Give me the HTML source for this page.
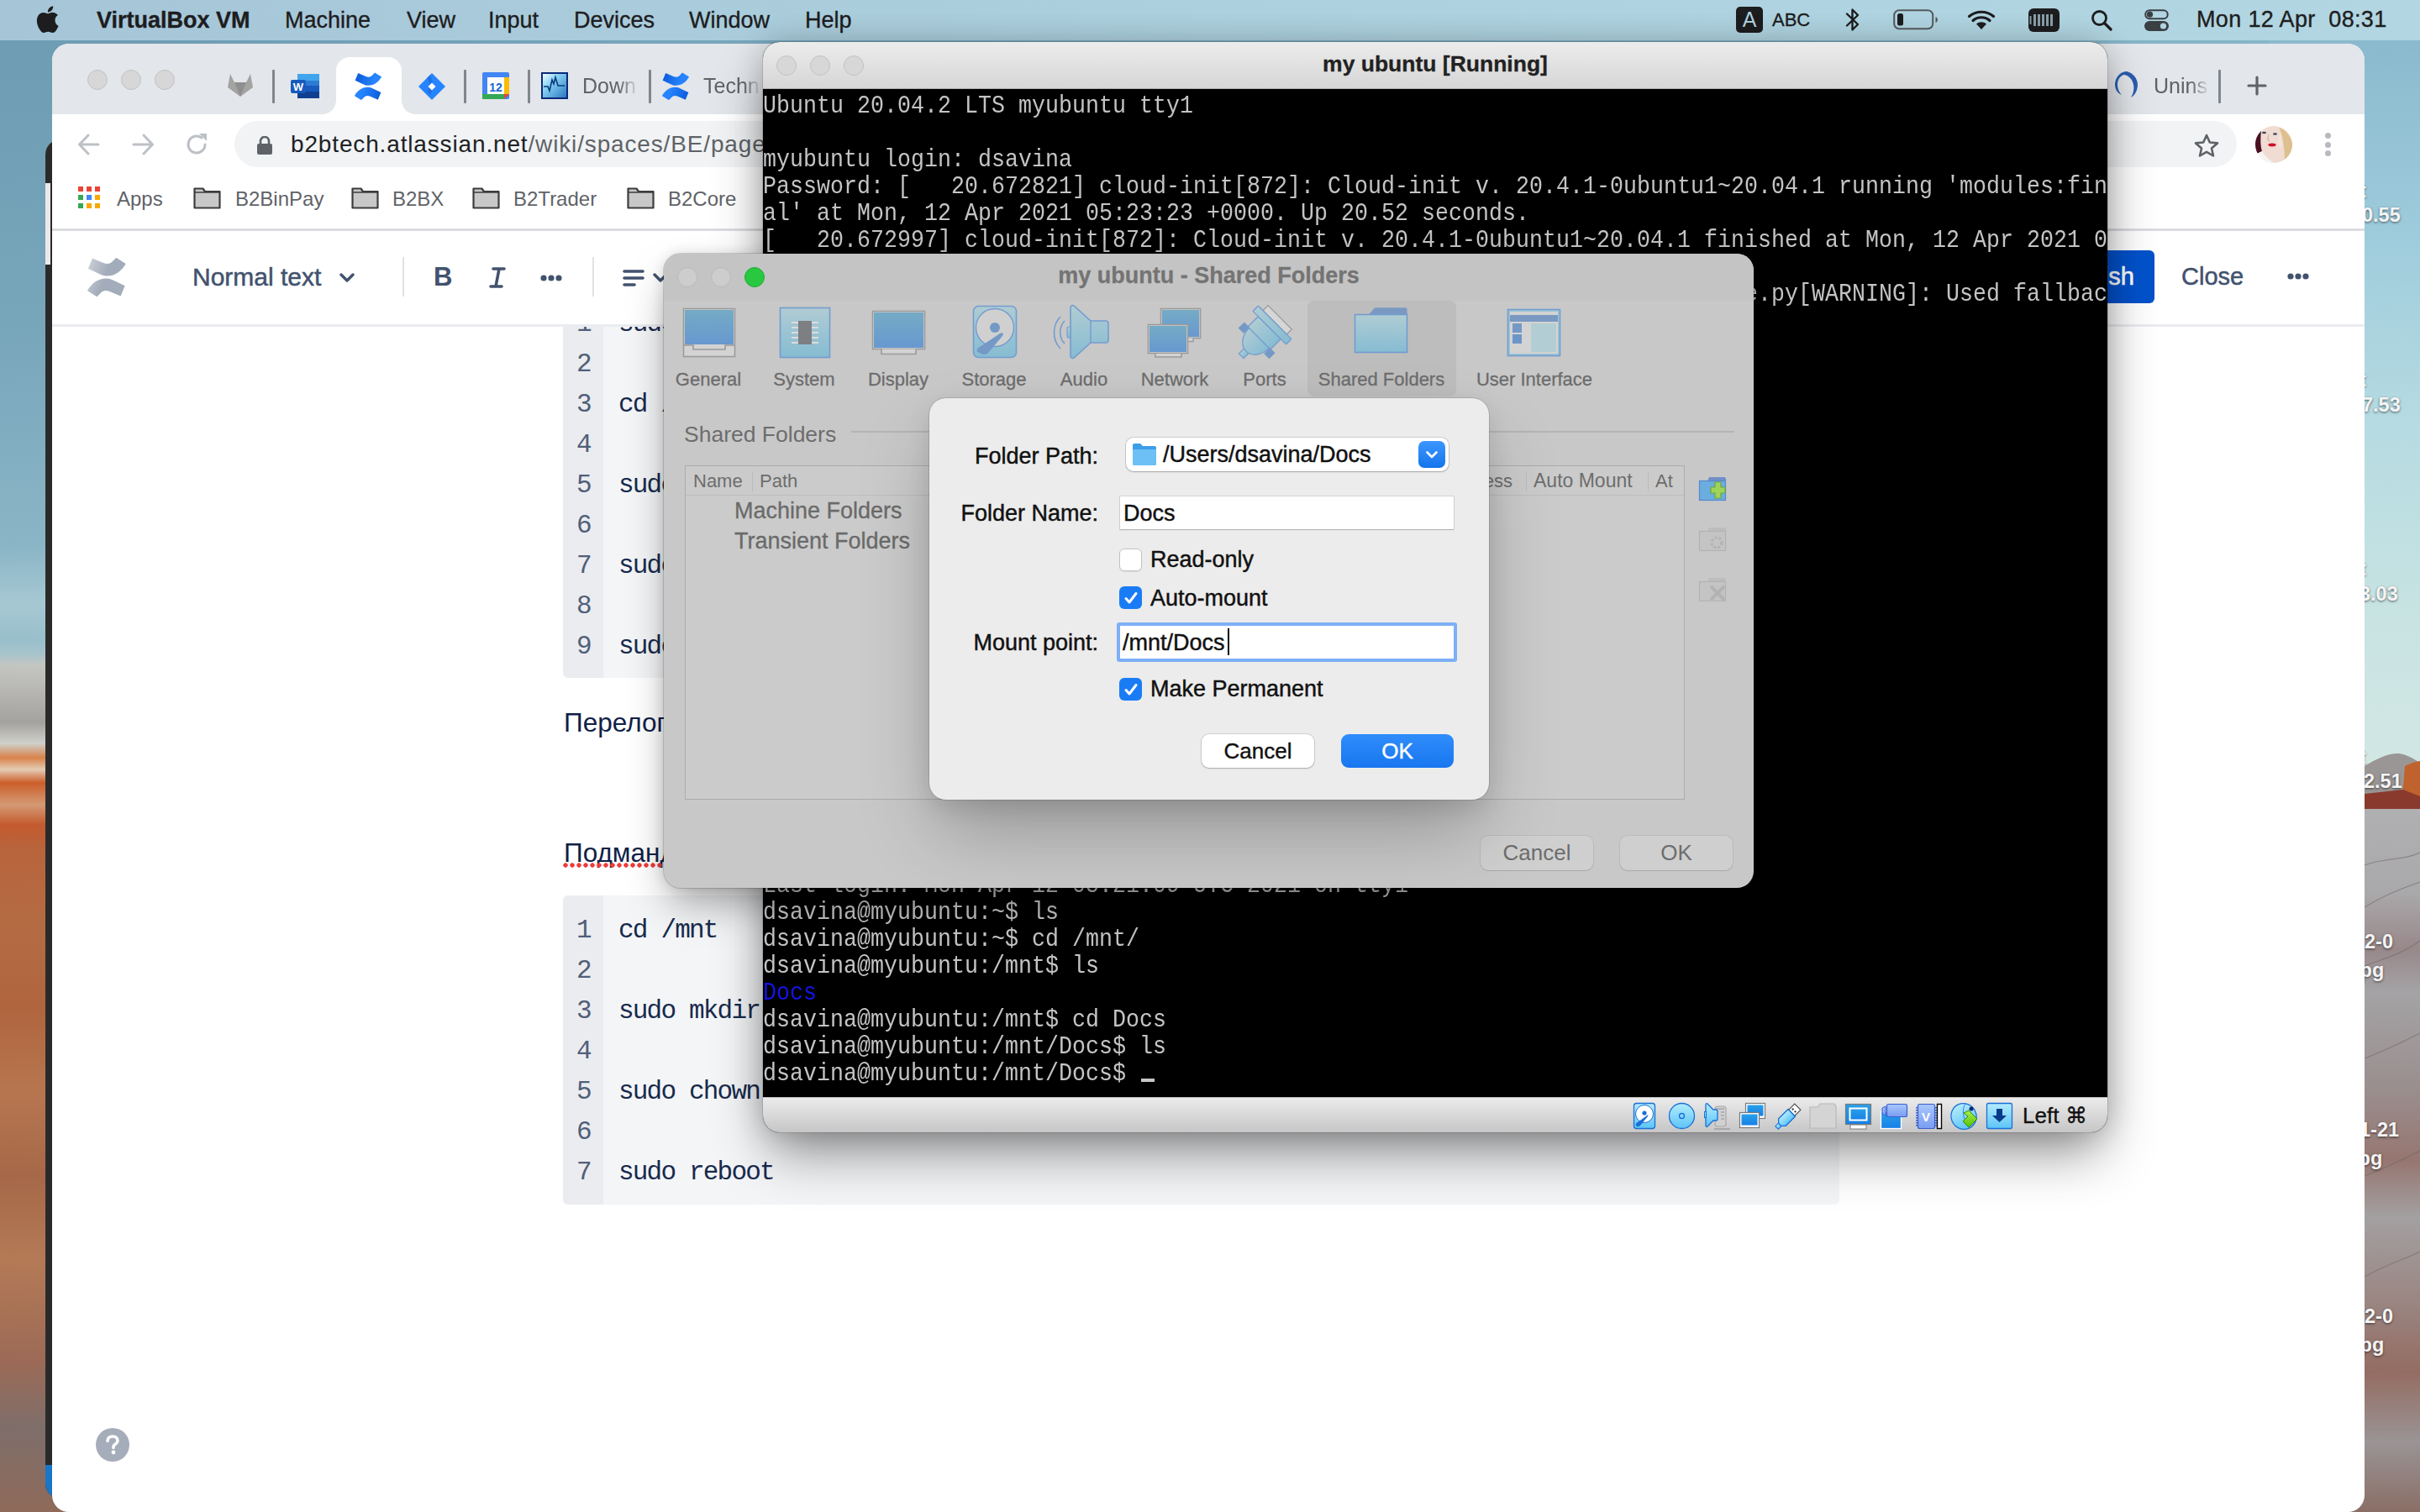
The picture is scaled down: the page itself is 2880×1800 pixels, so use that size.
<!DOCTYPE html>
<html><head><meta charset="utf-8">
<style>
*{box-sizing:border-box;margin:0;padding:0}
html,body{width:2880px;height:1800px;overflow:hidden}
body{font-family:"Liberation Sans",sans-serif;position:relative;background:#9cc3d4}
.a{position:absolute}
#wall{left:0;top:0;width:2880px;height:1800px;background:linear-gradient(90deg,#6c9cb3,#7eaec2 50%,#86b6ca)}
#wallR{left:2700px;top:0;width:180px;height:1800px}
#wallL{left:0;top:0;width:140px;height:1800px;
background:linear-gradient(180deg,#6c9cb3 0px,#78a6bb 400px,#8ab5c6 650px,#a6c8d3 720px,#98bfcb 760px,#a6c4cc 778px,#c4c6c2 792px,#b4b2ae 830px,#a4a29e 860px,#cfd0cb 885px,#d8824a 902px,#e4ccb4 916px,#cc5e2a 932px,#d49a74 958px,#c45a2e 982px,#b8643c 1010px,#b46b42 1100px,#b0653e 1200px,#b77650 1300px,#a66848 1400px,#b47a56 1500px,#9c6a56 1620px,#7e6e6a 1700px,#8f6a5a 1800px)}
.dl{position:absolute;left:2814px;font-size:23.5px;font-weight:bold;color:#f4f4f4;text-shadow:0 1px 3px rgba(0,0,0,0.6);white-space:nowrap;overflow:hidden}
#menubar{left:0;top:0;width:2880px;height:48px;background:linear-gradient(90deg,#a6c6d8,#acd0de 50%,#b2d6e2);color:#1d1d1f;font-size:27px}
#menubar span{position:absolute;top:9px;white-space:nowrap;-webkit-text-stroke:0.35px #1d1d1f}

#darkwin{left:54px;top:166px;width:40px;height:1618px;background:#2b2a2a;border-radius:18px 0 0 18px;overflow:hidden}
#browser{left:62px;top:52px;width:2752px;height:1748px;background:#fff;border-radius:20px 20px 20px 20px;overflow:hidden}
#tabstrip{left:0;top:0;width:2752px;height:84px;background:#e3e6ea}
.tl{position:absolute;width:24px;height:24px;border-radius:50%;background:#d7d7d7;border:1px solid #c2c2c2}
.sep{position:absolute;width:2.5px;background:#80868b;border-radius:1px}
.tabt{position:absolute;font-size:25px;color:#5f6368;white-space:nowrap;top:36px}
#omni{left:217px;top:92px;width:2383px;height:55px;background:#f1f3f4;border-radius:28px}
.bm{position:absolute;font-size:24px;color:#5f6368;top:170.5px;white-space:nowrap}
#bmline{left:0;top:220px;width:2752px;height:3px;background:#dadce0}
#cftool{left:0;top:223px;width:2752px;height:113px;background:#fff}
#cfline{left:0;top:334px;width:2752px;height:3px;background:#ebecf0}
.cfsep{position:absolute;width:2px;height:47px;top:31px;background:#dfe1e6}
.code{position:absolute;left:608px;width:1519px;background:#f4f5f7;border-radius:6px;overflow:hidden}
.gut{position:absolute;left:0;top:0;width:48px;height:100%;background:#ebecf0}
.ln{position:absolute;left:16px;font-family:"Liberation Mono",monospace;font-size:31px;letter-spacing:-1.8px;color:#505f79;line-height:48px}
.cl{position:absolute;left:66px;font-family:"Liberation Mono",monospace;font-size:31px;letter-spacing:-1.8px;color:#172b4d;line-height:48px;white-space:pre}
.ptxt{position:absolute;left:609px;font-size:31.5px;color:#0f2147;white-space:nowrap}

#vm{left:908px;top:50px;width:1600px;height:1298px;border-radius:20px;overflow:hidden;background:#000;box-shadow:0 30px 65px -8px rgba(0,0,0,0.45),0 0 34px rgba(0,0,0,0.17),0 0 0 1px rgba(0,0,0,0.12)}
#vmtitle{left:0;top:0;width:1600px;height:56px;background:linear-gradient(180deg,#ececec,#d6d6d6);border-bottom:1px solid #aeaeae}
#vmtitle .t{position:absolute;left:0;width:1600px;top:11px;text-align:center;font-size:26.5px;font-weight:bold;color:#222;-webkit-text-stroke:0.3px #222}
#term{left:0;top:56px;padding-top:0;width:1600px;height:1200px;background:#000;overflow:hidden}
.tr{position:absolute;left:0;height:32px;margin-top:1.7px;font-family:"Liberation Mono",monospace;font-size:26.6px;letter-spacing:0.04px;color:#c4c4c4;white-space:pre;line-height:32px;transform:scaleY(1.12);transform-origin:0 0}
#vmstatus{left:0;top:1256px;width:1600px;height:42px;background:linear-gradient(180deg,#ebebeb,#c6c6c6);border-top:1px solid #bdbdbd}
#set{left:790px;top:302px;width:1297px;height:755px;border-radius:20px;background:#c8c8c8;box-shadow:0 24px 50px -8px rgba(0,0,0,0.38),0 0 16px rgba(0,0,0,0.12),0 0 0 1px rgba(0,0,0,0.15);overflow:hidden}
.lbl{position:absolute;font-size:22px;color:#6d6d6d;-webkit-text-stroke:0.3px #6d6d6d;white-space:nowrap;text-align:center;margin-top:4px}
#sheet{left:1106px;top:474px;width:666px;height:478px;border-radius:20px;background:#ececec;box-shadow:0 45px 90px -10px rgba(0,0,0,0.26),0 10px 28px rgba(0,0,0,0.10),0 0 0 1px rgba(0,0,0,0.12)}
.sl{position:absolute;font-size:27px;color:#111;white-space:nowrap;-webkit-text-stroke:0.45px #111}
.cb{position:absolute;left:226px;width:27px;height:27px;border-radius:6px}
.cbon{background:#1a7cf5}
.cboff{background:#fff;border:1px solid #c2c2c2;box-shadow:0 1px 1px rgba(0,0,0,0.08)}
</style></head><body>
<div id="wall" class="a"></div>
<div id="wallL" class="a"></div>
<svg id="wallR" class="a" width="180" height="1800" viewBox="2700 0 180 1800">
<defs>
<linearGradient id="sky" x1="0" y1="0" x2="0" y2="1"><stop offset="0" stop-color="#86b6ca"/><stop offset="0.28" stop-color="#9ccadb"/><stop offset="0.55" stop-color="#b6dbe2"/><stop offset="0.8" stop-color="#c8e3e2"/><stop offset="1" stop-color="#d2e7e4"/></linearGradient>
<linearGradient id="rock" x1="0" y1="0" x2="0" y2="1"><stop offset="0" stop-color="#b0afb1"/><stop offset="0.12" stop-color="#a9a8aa"/><stop offset="0.2" stop-color="#98888a"/><stop offset="0.26" stop-color="#a4a3a5"/><stop offset="0.4" stop-color="#9a8e8e"/><stop offset="0.5" stop-color="#967670"/><stop offset="0.58" stop-color="#a3a0a1"/><stop offset="0.7" stop-color="#9a8682"/><stop offset="0.8" stop-color="#946c62"/><stop offset="0.9" stop-color="#9a9495"/><stop offset="1" stop-color="#8a6e66"/></linearGradient>
</defs>
<rect x="2700" y="0" width="180" height="920" fill="url(#sky)"/>
<path d="M2700 940L2814 912C2830 902 2845 896 2855 897C2865 898 2875 905 2880 908V1800H2700Z" fill="#9a9696"/>
<path d="M2862 912C2870 908 2878 906 2880 906V962H2858Z" fill="#c0622e"/>
<path d="M2700 955L2814 945L2860 940L2880 948V965H2700Z" fill="#8a3a2c"/>
<rect x="2700" y="963" width="180" height="837" fill="url(#rock)"/>
<g stroke="#6e6464" stroke-width="1.2" fill="none" opacity="0.5">
<path d="M2814 1030C2840 1020 2860 1025 2880 1015"/><path d="M2814 1080C2830 1070 2850 1060 2880 1050"/><path d="M2814 1150C2840 1140 2860 1135 2880 1120"/><path d="M2814 1260C2840 1250 2860 1240 2880 1230"/><path d="M2814 1400C2840 1390 2860 1380 2880 1370"/><path d="M2814 1520C2840 1505 2860 1500 2880 1490"/>
</g>
</svg>
<div class="dl" style="top:214px;width:66px"><span style="margin-left:-6px">t</span></div>
<div class="dl" style="top:439px;width:66px"><span style="margin-left:-6px">t</span></div>
<div class="dl" style="top:664px;width:66px"><span style="margin-left:-6px">t</span></div>
<div class="dl" style="top:888px;width:66px"><span style="margin-left:-6px">t</span></div>
<div class="dl" style="top:243px;width:66px"><span style="margin-left:-3px">0.55</span></div>
<div class="dl" style="top:469px;width:66px"><span style="margin-left:-3px">7.53</span></div>
<div class="dl" style="top:694px;width:66px"><span style="margin-left:-6px">3.03</span></div>
<div class="dl" style="top:917px;width:66px"><span style="margin-left:-1px">2.51</span></div>
<div class="dl" style="top:1104px;width:66px;line-height:34px"><span style="margin-left:0px">2-0</span><br><span style="margin-left:-12px">jpg</span></div>
<div class="dl" style="top:1328px;width:66px;line-height:34px"><span style="margin-left:-6px">1-21</span><br><span style="margin-left:-14px">jpg</span></div>
<div class="dl" style="top:1550px;width:66px;line-height:34px"><span style="margin-left:0px">2-0</span><br><span style="margin-left:-12px">jpg</span></div>
<div id="menubar" class="a">
  <span style="left:41px;top:6px"><svg width="30" height="34" viewBox="0 0 30 34"><path fill="#1d1d1f" d="M24.5 18c0-4 3.3-5.9 3.4-6-1.9-2.7-4.8-3.1-5.8-3.1-2.5-.3-4.8 1.4-6.1 1.4-1.3 0-3.2-1.4-5.2-1.3-2.7 0-5.2 1.6-6.6 4-2.8 4.9-.7 12.1 2 16.1 1.3 1.9 2.9 4.1 5 4 2-.1 2.8-1.3 5.2-1.3 2.4 0 3.1 1.3 5.2 1.3 2.2 0 3.5-2 4.8-3.9 1.5-2.2 2.1-4.3 2.2-4.4-.1 0-4.1-1.6-4.1-6.8zM20.6 6.2c1.1-1.3 1.8-3.2 1.6-5-1.6.1-3.5 1.1-4.6 2.4-1 1.2-1.9 3-1.7 4.8 1.8.1 3.6-.9 4.7-2.2z"/></svg></span>
  <span style="left:115px;font-weight:bold">VirtualBox VM</span>
  <span style="left:339px">Machine</span>
  <span style="left:484px">View</span>
  <span style="left:581px">Input</span>
  <span style="left:683px">Devices</span>
  <span style="left:820px">Window</span>
  <span style="left:958px">Help</span>

  <div class="a" style="left:2066px;top:8px;width:32px;height:31px;border-radius:5px;background:#1d1d1f;color:#b0d3e0;font-size:25px;text-align:center;line-height:31px">A</div>
  <span style="left:2109px;top:11px;font-size:22px">ABC</span>
  <svg class="a" style="left:2195px;top:8px" width="20" height="31" viewBox="0 0 20 31"><path d="M3 8.5L16 21L9.5 27.5V3.5L16 10L3 22.5" fill="none" stroke="#1d1d1f" stroke-width="2.4" stroke-linejoin="round" stroke-linecap="round"/></svg>
  <svg class="a" style="left:2253px;top:11px" width="55" height="25" viewBox="0 0 55 25"><rect x="1.2" y="1.2" width="46" height="22" rx="6" fill="none" stroke="#555a5e" stroke-width="2"/><rect x="5" y="5" width="7" height="14.5" rx="2.5" fill="#1d1d1f"/><path d="M50.5 9V16C52 15.5 53 14 53 12.5C53 11 52 9.5 50.5 9Z" fill="#555a5e"/></svg>
  <svg class="a" style="left:2341px;top:11px" width="34" height="25" viewBox="0 0 34 25"><path d="M17 24L11 17.5C14.5 14.5 19.5 14.5 23 17.5Z" fill="#1d1d1f"/><path d="M7 13.5C12.5 8.5 21.5 8.5 27 13.5" fill="none" stroke="#1d1d1f" stroke-width="3.2" stroke-linecap="round"/><path d="M2.5 8.5C10.5 1.5 23.5 1.5 31.5 8.5" fill="none" stroke="#1d1d1f" stroke-width="3.2" stroke-linecap="round"/></svg>
  <svg class="a" style="left:2414px;top:10px" width="37" height="28" viewBox="0 0 37 28"><rect x="0" y="0" width="37" height="28" rx="6" fill="#1d1d1f"/><g fill="#8a9ea8"><rect x="6" y="7" width="3" height="14"/><rect x="11" y="7" width="3" height="14"/><rect x="16" y="7" width="3" height="14"/><rect x="21" y="7" width="3" height="14"/><rect x="26" y="7" width="3" height="14"/></g><rect x="1.5" y="9" width="2" height="10" fill="#8a9ea8"/></svg>
  <svg class="a" style="left:2488px;top:11px" width="26" height="26" viewBox="0 0 26 26"><circle cx="10.5" cy="10.5" r="8" fill="none" stroke="#1d1d1f" stroke-width="2.8"/><path d="M16.5 16.5L24 24" stroke="#1d1d1f" stroke-width="3.2" stroke-linecap="round"/></svg>
  <svg class="a" style="left:2552px;top:11px" width="29" height="26" viewBox="0 0 29 26"><rect x="1.2" y="1.2" width="26.5" height="10" rx="5" fill="none" stroke="#3a3f44" stroke-width="2"/><circle cx="6.5" cy="6.2" r="3.6" fill="#3a3f44"/><rect x="0" y="14" width="29" height="12" rx="6" fill="#3a3f44"/><circle cx="22.5" cy="20" r="3.6" fill="#b0d3e0"/></svg>
  <span style="left:2614px;top:8px;letter-spacing:0.35px">Mon 12 Apr&nbsp;&nbsp;08:31</span>
</div>

<div id="darkwin" class="a"><div class="a" style="left:0;top:52px;width:6px;height:97px;background:#ece8e8"></div><div class="a" style="left:0;top:1578px;width:14px;height:40px;background:#1a76c8"></div></div>
<div id="browser" class="a">
 <div id="tabstrip" class="a">
  <div class="tl" style="left:42px;top:31px"></div>
  <div class="tl" style="left:82px;top:31px"></div>
  <div class="tl" style="left:122px;top:31px"></div>
  <!-- gitlab -->
  <svg class="a" style="left:208px;top:34px" width="32" height="30" viewBox="0 0 32 30"><path fill="#a3a3a3" d="M16 29 L1 18 L4 2 L9 12 H23 L28 2 L31 18 Z"/><path fill="#8f8f8f" d="M16 29 L9 12 H23 Z"/></svg>
  <div class="sep" style="left:262px;top:31px;height:40px"></div>
  <!-- word -->
  <svg class="a" style="left:284px;top:36px" width="34" height="29" viewBox="0 0 34 29"><rect x="8" y="0" width="26" height="29" rx="2" fill="#2b7cd3"/><rect x="8" y="0" width="26" height="8" fill="#41a5ee"/><rect x="8" y="14" width="26" height="8" fill="#185abd"/><rect x="8" y="21" width="26" height="8" fill="#103f91"/><rect x="0" y="7" width="18" height="16" rx="2" fill="#185abd"/><text x="9" y="20" font-family="Liberation Sans" font-weight="bold" font-size="13" fill="#fff" text-anchor="middle">W</text></svg>
  <!-- active tab -->
  <div class="a" style="left:338px;top:16px;width:78px;height:68px;background:#fff;border-radius:16px 16px 0 0"></div>
  <div class="a" style="left:322px;top:68px;width:16px;height:16px;background:radial-gradient(circle at 0 0,#e3e6ea 15.5px,#fff 16px)"></div>
  <div class="a" style="left:416px;top:68px;width:16px;height:16px;background:radial-gradient(circle at 100% 0,#e3e6ea 15.5px,#fff 16px)"></div>
  <svg class="a" style="left:360px;top:34px" width="33" height="33" viewBox="104 306 47 47"><defs><linearGradient id="ct1a" gradientUnits="userSpaceOnUse" x1="106" y1="309" x2="145" y2="322"><stop offset="0" stop-color="#0b5ad8"/><stop offset="0.8" stop-color="#2684ff"/></linearGradient></defs><path fill="url(#ct1a)" d="M110 307.5 L123 313 C128 315 132 314 134.5 310.5 L138.3 306.8 L149.7 314 C145 322 138 328.5 127 328.6 C123.5 328.6 121 327.5 118.5 326.3 L104.9 319.8 Z"/><path fill="url(#ct1a)" d="M110 307.5 L123 313 C128 315 132 314 134.5 310.5 L138.3 306.8 L149.7 314 C145 322 138 328.5 127 328.6 C123.5 328.6 121 327.5 118.5 326.3 L104.9 319.8 Z" transform="rotate(180 126.8 330)"/></svg>
  <!-- jira -->
    <svg class="a" style="left:436px;top:35px" width="32" height="32" viewBox="0 0 32 32"><path fill="#2684ff" d="M16 0 L32 16 L16 32 L0 16 Z"/><path fill="#1b63d0" d="M10 6 C14 10 14 18 10 22 L14 26 C18 20 18 12 14 2 Z" opacity="0.55"/><path fill="#fff" d="M16 11.5 L20.5 16 L16 20.5 L11.5 16 Z"/></svg>
  <div class="sep" style="left:490px;top:31px;height:40px"></div>
  <!-- calendar -->
  <svg class="a" style="left:512px;top:34px" width="32" height="32" viewBox="0 0 32 32"><rect x="0" y="0" width="32" height="32" rx="2" fill="#4285f4"/><rect x="0" y="26" width="26" height="6" fill="#34a853"/><rect x="26" y="6" width="6" height="20" fill="#fbbc04"/><path d="M26 26 H32 L26 32 Z" fill="#ea4335"/><rect x="6" y="6" width="20" height="20" fill="#fff"/><text x="16" y="22.5" font-family="Liberation Sans" font-weight="bold" font-size="14" fill="#1967d2" text-anchor="middle">12</text></svg>
  <div class="sep" style="left:566px;top:31px;height:40px"></div>
  <!-- activity -->
  <svg class="a" style="left:582px;top:34px" width="32" height="32" viewBox="0 0 32 32"><defs><linearGradient id="amg" x1="0" y1="0" x2="1" y2="1"><stop offset="0" stop-color="#f4fcff"/><stop offset="0.35" stop-color="#8ad4f4"/><stop offset="1" stop-color="#2a78c0"/></linearGradient></defs><rect x="0" y="0" width="32" height="32" fill="#0a2a7a"/><rect x="2" y="2" width="28" height="28" fill="url(#amg)"/><path d="M3 17 H8 L10 22 L13 9 L15 14 L17 6 L20 16 H28" fill="none" stroke="#0a3a80" stroke-width="1.6"/></svg>
  <div class="tabt" style="left:631px;width:64px;overflow:hidden;-webkit-mask-image:linear-gradient(90deg,#000 68%,rgba(0,0,0,0.15) 100%)">Down</div>
  <div class="sep" style="left:710px;top:31px;height:40px"></div>
  <svg class="a" style="left:726px;top:34px" width="33" height="33" viewBox="104 306 47 47"><defs><linearGradient id="ct2a" gradientUnits="userSpaceOnUse" x1="106" y1="309" x2="145" y2="322"><stop offset="0" stop-color="#0b5ad8"/><stop offset="0.8" stop-color="#2684ff"/></linearGradient></defs><path fill="url(#ct2a)" d="M110 307.5 L123 313 C128 315 132 314 134.5 310.5 L138.3 306.8 L149.7 314 C145 322 138 328.5 127 328.6 C123.5 328.6 121 327.5 118.5 326.3 L104.9 319.8 Z"/><path fill="url(#ct2a)" d="M110 307.5 L123 313 C128 315 132 314 134.5 310.5 L138.3 306.8 L149.7 314 C145 322 138 328.5 127 328.6 C123.5 328.6 121 327.5 118.5 326.3 L104.9 319.8 Z" transform="rotate(180 126.8 330)"/></svg>
  <div class="tabt" style="left:775px;width:66px;overflow:hidden;-webkit-mask-image:linear-gradient(90deg,#000 72%,rgba(0,0,0,0.15) 100%)">Techn</div>
  <!-- right side tabs -->
  <svg class="a" style="left:2454px;top:32px" width="30" height="34" viewBox="0 0 30 34"><path fill="#2a5db0" d="M14 1 C22 2 28 9 28 17 C28 24 24 30 20 32 C23 27 24 22 23 17 C22 11 18 6 12 5 C7 6 4 11 4 17 C4 22 6 26 9 29 C4 27 1 22 1 17 C1 9 6 2 14 1 Z"/></svg>
  <div class="tabt" style="left:2501px;width:64px;overflow:hidden;-webkit-mask-image:linear-gradient(90deg,#000 68%,rgba(0,0,0,0.15) 100%)">Unins</div>
  <div class="sep" style="left:2578px;top:31px;height:40px"></div>
  <svg class="a" style="left:2612px;top:38px" width="24" height="24" viewBox="0 0 24 24"><path d="M12 2V22M2 12H22" stroke="#5f6368" stroke-width="3.2" stroke-linecap="round"/></svg>
 </div>
 <!-- toolbar -->
 <svg class="a" style="left:30px;top:106px" width="28" height="28" viewBox="0 0 28 28"><path d="M25 14H3M13 3L2.5 14L13 25" fill="none" stroke="#bdc1c6" stroke-width="3" stroke-linecap="round" stroke-linejoin="round"/></svg>
 <svg class="a" style="left:94px;top:106px" width="28" height="28" viewBox="0 0 28 28"><path d="M3 14H25M15 3L25.5 14L15 25" fill="none" stroke="#bdc1c6" stroke-width="3" stroke-linecap="round" stroke-linejoin="round"/></svg>
 <svg class="a" style="left:158px;top:105px" width="30" height="30" viewBox="0 0 30 30"><path d="M24 15A10 10 0 1 1 20 7" fill="none" stroke="#bdc1c6" stroke-width="3" stroke-linecap="round"/><path d="M17 2H26V11Z" fill="#bdc1c6"/></svg>
 <div id="omni" class="a"></div>
 <svg class="a" style="left:244px;top:110px" width="18" height="22" viewBox="0 0 18 22"><path d="M4 10V6A5 5 0 0 1 14 6V10" fill="none" stroke="#5f6368" stroke-width="2.6"/><rect x="0" y="9" width="18" height="13" rx="2" fill="#5f6368"/></svg>
 <div class="a" style="left:284px;top:104px;font-size:28px;letter-spacing:0.85px;color:#202124;white-space:nowrap">b2btech.atlassian.net<span style="color:#5f6368">/wiki/spaces/BE/pages/edit-v2/123456789</span></div>
 <svg class="a" style="left:2548px;top:106px" width="32" height="32" viewBox="0 0 32 32"><path d="M16 3L19.8 11.5L29 12.4L22 18.5L24 27.5L16 22.8L8 27.5L10 18.5L3 12.4L12.2 11.5Z" fill="none" stroke="#5f6368" stroke-width="2.6" stroke-linejoin="round"/></svg>
 <svg class="a" style="left:2622px;top:98px" width="44" height="44" viewBox="0 0 44 44"><defs><clipPath id="avc"><circle cx="22" cy="22" r="22"/></clipPath></defs><g clip-path="url(#avc)"><rect width="44" height="44" fill="#f0dcd2"/><path d="M0 6H7C6 14 6 24 8 30L0 34Z" fill="#4a0f22"/><path d="M28 2C36 4 42 12 44 20V44H34C36 36 34 26 33 18C32 10 30 6 28 2Z" fill="#ddc08e"/><path d="M0 34L8 30C12 36 16 40 22 44H0Z" fill="#f6f4f2"/><path d="M26 20C27 16 29 12 30 8L32 26C30 28 28 26 26 20Z" fill="#f4e4dc"/><ellipse cx="20" cy="22.5" rx="4.6" ry="1.9" fill="#d0102a"/><ellipse cx="10.5" cy="8" rx="2.6" ry="1.2" fill="#3a4a60"/><ellipse cx="23.5" cy="9.5" rx="2.6" ry="1.2" fill="#3a4a60"/><path d="M16 10C15 14 14 17 17 18" fill="none" stroke="#d8b0a0" stroke-width="1.2"/></g></svg>
 <div class="a" style="left:2704.5px;top:106px;width:7px;height:7px;border-radius:50%;background:#b6babe"></div>
 <div class="a" style="left:2704.5px;top:116.5px;width:7px;height:7px;border-radius:50%;background:#b6babe"></div>
 <div class="a" style="left:2704.5px;top:126.5px;width:7px;height:7px;border-radius:50%;background:#b6babe"></div>
 <!-- bookmarks -->
 <svg class="a" style="left:31px;top:170px" width="27" height="27" viewBox="0 0 27 27"><g><rect x="0" y="0" width="6" height="6" fill="#ea4335"/><rect x="10" y="0" width="6" height="6" fill="#ea4335"/><rect x="20" y="0" width="6" height="6" fill="#ea4335"/><rect x="0" y="10" width="6" height="6" fill="#34a853"/><rect x="10" y="10" width="6" height="6" fill="#4285f4"/><rect x="20" y="10" width="6" height="6" fill="#f9a800"/><rect x="0" y="20" width="6" height="6" fill="#34a853"/><rect x="10" y="20" width="6" height="6" fill="#f9a800"/><rect x="20" y="20" width="6" height="6" fill="#f9a800"/></g></svg>
 <div class="bm" style="left:77px">Apps</div>
 <svg class="a" style="left:168px;top:171px" width="33" height="26" viewBox="0 0 33 26"><path d="M1.5 3V24.5H31.5V5H14L11.5 1.5H1.5Z" fill="#c8c8c8" stroke="#3c3c3c" stroke-width="2.2" stroke-linejoin="round"/><path d="M1.5 6H31.5" stroke="#3c3c3c" stroke-width="1.5"/></svg>
 <div class="bm" style="left:218px">B2BinPay</div>
 <svg class="a" style="left:356px;top:171px" width="33" height="26" viewBox="0 0 33 26"><path d="M1.5 3V24.5H31.5V5H14L11.5 1.5H1.5Z" fill="#c8c8c8" stroke="#3c3c3c" stroke-width="2.2" stroke-linejoin="round"/><path d="M1.5 6H31.5" stroke="#3c3c3c" stroke-width="1.5"/></svg>
 <div class="bm" style="left:405px">B2BX</div>
 <svg class="a" style="left:500px;top:171px" width="33" height="26" viewBox="0 0 33 26"><path d="M1.5 3V24.5H31.5V5H14L11.5 1.5H1.5Z" fill="#c8c8c8" stroke="#3c3c3c" stroke-width="2.2" stroke-linejoin="round"/><path d="M1.5 6H31.5" stroke="#3c3c3c" stroke-width="1.5"/></svg>
 <div class="bm" style="left:549px">B2Trader</div>
 <svg class="a" style="left:684px;top:171px" width="33" height="26" viewBox="0 0 33 26"><path d="M1.5 3V24.5H31.5V5H14L11.5 1.5H1.5Z" fill="#c8c8c8" stroke="#3c3c3c" stroke-width="2.2" stroke-linejoin="round"/><path d="M1.5 6H31.5" stroke="#3c3c3c" stroke-width="1.5"/></svg>
 <div class="bm" style="left:733px">B2Core</div>
 <div id="bmline" class="a"></div>
 <!-- content -->
 <div class="code" style="top:290px;height:465px">
  <div class="gut"></div>
  <div class="ln" style="top:20px">1<br>2<br>3<br>4<br>5<br>6<br>7<br>8<br>9</div>
  <div class="cl" style="top:20px">sudo apt install build-essential dkms linux-headers-$(uname -r)

cd /media/dsavina/VBox_GAs

sudo ./VBoxLinuxAdditions.run

sudo usermod -aG vboxsf dsavina

sudo reboot</div>
 </div>
 <div class="ptxt" style="top:790px">Перелогиниться в систему</div>
 <div class="ptxt" style="top:945px">Подмандить папку</div>
 <div class="a" style="left:607px;top:975px;width:130px;height:6px;background:radial-gradient(circle,#f03c3c 2.4px,transparent 3px) 0 0/8px 6px"></div>
 <div class="code" style="top:1014px;height:368px">
  <div class="gut"></div>
  <div class="ln" style="top:18px">1<br>2<br>3<br>4<br>5<br>6<br>7</div>
  <div class="cl" style="top:18px">cd /mnt

sudo mkdir Docs

sudo chown dsavina Docs

sudo reboot</div>
 </div>
 <div id="cftool" class="a">
 <svg class="a" style="left:38px;top:27px" width="56" height="56" viewBox="100 302 56 56"><defs><linearGradient id="g1" gradientUnits="userSpaceOnUse" x1="106" y1="309" x2="140" y2="322"><stop offset="0" stop-color="#cbcfd7"/><stop offset="0.7" stop-color="#a3acba"/></linearGradient><linearGradient id="g2" gradientUnits="userSpaceOnUse" x1="148" y1="351" x2="114" y2="338"><stop offset="0" stop-color="#cbcfd7"/><stop offset="0.7" stop-color="#a3acba"/></linearGradient></defs><path fill="url(#g1)" d="M110 307.5 L123 313 C128 315 132 314 134.5 310.5 L138.3 306.8 L149.7 314 C145 322 138 328.5 127 328.6 C123.5 328.6 121 327.5 118.5 326.3 L104.9 319.8 Z"/><path fill="url(#g2)" d="M110 307.5 L123 313 C128 315 132 314 134.5 310.5 L138.3 306.8 L149.7 314 C145 322 138 328.5 127 328.6 C123.5 328.6 121 327.5 118.5 326.3 L104.9 319.8 Z" transform="rotate(180 126.8 330)"/></svg>
 <div class="a" style="left:167px;top:38px;font-size:30px;color:#42526e;white-space:nowrap;-webkit-text-stroke:0.5px #42526e">Normal text</div>
 <svg class="a" style="left:342px;top:50px" width="18" height="12" viewBox="0 0 18 12"><path d="M2 2L9 9L16 2" fill="none" stroke="#42526e" stroke-width="3.4" stroke-linecap="round" stroke-linejoin="round"/></svg>
 <div class="cfsep" style="left:417px"></div>
 <div class="a" style="left:454px;top:37px;font-size:31px;font-weight:bold;color:#42526e">B</div>
 <svg class="a" style="left:518px;top:43px" width="24" height="25" viewBox="0 0 24 25"><path d="M7 2H20M4 23H17M14 2L10 23" fill="none" stroke="#42526e" stroke-width="3.6" stroke-linecap="round"/></svg>
 <svg class="a" style="left:581px;top:52px" width="26" height="8" viewBox="0 0 26 8"><circle cx="4" cy="4" r="3.6" fill="#42526e"/><circle cx="13" cy="4" r="3.6" fill="#42526e"/><circle cx="22" cy="4" r="3.6" fill="#42526e"/></svg>
 <div class="cfsep" style="left:643px"></div>
 <svg class="a" style="left:715px;top:50px" width="18" height="12" viewBox="0 0 18 12"><path d="M2 2L9 9L16 2" fill="none" stroke="#42526e" stroke-width="3.4" stroke-linecap="round" stroke-linejoin="round"/></svg>
 <svg class="a" style="left:679px;top:45px" width="26" height="22" viewBox="0 0 26 22"><path d="M2 3H24M2 11H24M2 19H14" stroke="#42526e" stroke-width="3.6" stroke-linecap="round"/></svg>
 <div class="a" style="left:2250px;top:23px;width:252px;height:63px;background:#0052cc;border-radius:6px;color:#fff;font-size:29px;text-align:right;padding-right:24px;line-height:63px;-webkit-text-stroke:0.6px #fff">Publish</div>
 <div class="a" style="left:2534px;top:38px;font-size:29px;color:#42526e;white-space:nowrap;-webkit-text-stroke:0.5px #42526e">Close</div>
 <svg class="a" style="left:2660px;top:50px" width="26" height="8" viewBox="0 0 26 8"><circle cx="4" cy="4" r="3.6" fill="#42526e"/><circle cx="13" cy="4" r="3.6" fill="#42526e"/><circle cx="22" cy="4" r="3.6" fill="#42526e"/></svg>
 </div>
 <div id="cfline" class="a"></div>
 <svg class="a" style="left:52px;top:1648px" width="40" height="40" viewBox="0 0 40 40"><circle cx="20" cy="20" r="20" fill="#a5adba"/><path d="M14 15.5C14 12 16.7 10 20 10C23.5 10 26 12.2 26 15.2C26 18.5 22.5 19.3 21.3 21.2C21 21.7 21 22.3 21 23.5" fill="none" stroke="#fff" stroke-width="3.6" stroke-linecap="round"/><circle cx="21" cy="29" r="2.4" fill="#fff"/></svg>
</div>

<div id="vm" class="a">
 <div id="vmtitle" class="a">
  <div class="tl" style="left:16px;top:16px"></div>
  <div class="tl" style="left:56px;top:16px"></div>
  <div class="tl" style="left:96px;top:16px"></div>
  <div class="t">my ubuntu [Running]</div>
 </div>
 <div id="term" class="a">
<div class="tr" style="top:0px">Ubuntu 20.04.2 LTS myubuntu tty1</div>
<div class="tr" style="top:64px">myubuntu login: dsavina</div>
<div class="tr" style="top:96px">Password: [   20.672821] cloud-init[872]: Cloud-init v. 20.4.1-0ubuntu1~20.04.1 running &#x27;modules:fin</div>
<div class="tr" style="top:128px">al&#x27; at Mon, 12 Apr 2021 05:23:23 +0000. Up 20.52 seconds.</div>
<div class="tr" style="top:160px">[   20.672997] cloud-init[872]: Cloud-init v. 20.4.1-0ubuntu1~20.04.1 finished at Mon, 12 Apr 2021 0</div>
<div class="tr" style="top:192px">5:23:23 +0000. Datasource DataSourceNone.  Up 20.66 seconds</div>
<div class="tr" style="top:224px">[   20.674588] cloud-init[872]: 2021-04-12 05:23:23,616 - cc_final_message.py[WARNING]: Used fallbac</div>
<div class="tr" style="top:256px">k datasource</div>
<div class="tr" style="top:928px">Last login: Mon Apr 12 05:21:09 UTC 2021 on tty1</div>
<div class="tr" style="top:960px">dsavina@myubuntu:~$ ls</div>
<div class="tr" style="top:992px">dsavina@myubuntu:~$ cd /mnt/</div>
<div class="tr" style="top:1024px">dsavina@myubuntu:/mnt$ ls</div>
<div class="tr" style="top:1056px;color:#1414e6">Docs</div>
<div class="tr" style="top:1088px">dsavina@myubuntu:/mnt$ cd Docs</div>
<div class="tr" style="top:1120px">dsavina@myubuntu:/mnt/Docs$ ls</div>
<div class="tr" style="top:1152px">dsavina@myubuntu:/mnt/Docs$ </div>
<div class="a" style="left:450px;top:1178px;width:16px;height:4px;background:#c6c6c6"></div>

 </div>
 <div id="vmstatus" class="a">
<svg class="a" style="left:0;top:0" width="1600" height="42" viewBox="0 0 1600 42">
<defs>
<linearGradient id="sb" x1="0" y1="0" x2="0" y2="1"><stop offset="0" stop-color="#b4ecff"/><stop offset="1" stop-color="#5cc4f6"/></linearGradient>
<linearGradient id="sbd" x1="0" y1="0" x2="0" y2="1"><stop offset="0" stop-color="#2aa0e8"/><stop offset="1" stop-color="#1680e8"/></linearGradient>
<linearGradient id="sv" x1="0" y1="0" x2="0" y2="1"><stop offset="0" stop-color="#a8c8ff"/><stop offset="1" stop-color="#7a9cf0"/></linearGradient>
<linearGradient id="sg" x1="0" y1="0" x2="0" y2="1"><stop offset="0" stop-color="#a8f050"/><stop offset="1" stop-color="#58c000"/></linearGradient>
</defs>
<g transform="translate(-908,-1306)">
<!-- hdd -->
<rect x="1944.5" y="1312.5" width="25" height="30" rx="3" fill="url(#sb)" stroke="#1a6fd6" stroke-width="1.3"/>
<circle cx="1957" cy="1325" r="10.5" fill="#fff" stroke="#1a6fd6" stroke-width="1"/>
<circle cx="1957" cy="1324" r="2.6" fill="#1a6fd6"/>
<path d="M1947 1339C1946 1337 1947 1336 1949 1335L1960 1327C1961 1326 1962 1327 1961 1328L1952 1339C1951 1340 1950 1340 1948 1340Z" fill="#1a6fd6"/>
<!-- cd -->
<circle cx="2001.5" cy="1327.5" r="15" fill="url(#sb)" stroke="#1a6fd6" stroke-width="1.3"/>
<circle cx="2001.5" cy="1327.5" r="3" fill="none" stroke="#1a6fd6" stroke-width="1.4"/>
<!-- audio -->
<rect x="2041" y="1316" width="13" height="24" rx="3" fill="#d0d0d0" stroke="#a8a8a8" stroke-width="1.2"/>
<path d="M2042 1319H2052M2048 1323H2052M2048 1327H2052M2048 1331H2052" stroke="#a8a8a8" stroke-width="1.4"/>
<path d="M2040 1343H2059" stroke="#a8a8a8" stroke-width="2"/>
<path d="M2032 1313L2039 1320H2042C2043 1320 2044 1321 2044 1322V1331C2044 1332 2043 1333 2042 1333H2039L2032 1340C2031 1341 2030 1340 2030 1339V1314C2030 1313 2031 1312 2032 1313Z" fill="url(#sb)" stroke="#1a6fd6" stroke-width="1.3"/>
<rect x="2028.5" y="1322.5" width="2" height="7" fill="url(#sb)" stroke="#1a6fd6" stroke-width="1"/>
<!-- network -->
<rect x="2077.5" y="1312.5" width="23" height="18" fill="#fff" stroke="#7a7a7a" stroke-width="1.2"/>
<rect x="2079.5" y="1314.5" width="19" height="13" fill="url(#sbd)"/>
<rect x="2070.5" y="1323.5" width="23" height="18" fill="#fff" stroke="#7a7a7a" stroke-width="1.2"/>
<rect x="2072.5" y="1325.5" width="19" height="13" fill="url(#sbd)"/>
<!-- usb -->
<g transform="translate(2128,1328) rotate(-45)">
<rect x="6" y="-5" width="10" height="10" fill="#fff" stroke="#555" stroke-width="1.2"/>
<rect x="9" y="-3" width="2" height="2" fill="#333"/><rect x="9" y="1" width="2" height="2" fill="#333"/>
<path d="M-10 -6H6V6H-10L-14 2V-2Z" fill="url(#sb)" stroke="#1a6fd6" stroke-width="1.3"/>
<rect x="-19" y="-2.5" width="5" height="5" fill="url(#sb)" stroke="#1a6fd6" stroke-width="1"/>
</g>
<!-- shared folder gray -->
<path d="M2166 1313H2183L2185 1316V1342H2154V1317H2163Z" fill="#d4d4d4" stroke="#b8b8b8" stroke-width="1.2"/>
<!-- display -->
<rect x="2196.5" y="1313.5" width="30" height="24" fill="url(#sbd)" stroke="#7a7a7a" stroke-width="1.2"/>
<rect x="2201.5" y="1318.5" width="20" height="14" fill="url(#sbd)" stroke="#fff" stroke-width="2"/>
<rect x="2202" y="1338" width="19" height="5" fill="#fff" stroke="#7a7a7a" stroke-width="1"/>
<!-- capture -->
<rect x="2238.5" y="1322.5" width="24" height="20" fill="url(#sbd)" stroke="#fff" stroke-width="1.3"/>
<rect x="2245.5" y="1313.5" width="24" height="15" rx="2" fill="url(#sv)" stroke="#3a5fd0" stroke-width="1.2"/>
<path d="M2244 1316L2240 1318V1325L2244 1327Z" fill="url(#sv)" stroke="#3a5fd0" stroke-width="1"/>
<!-- V chip -->
<rect x="2282.5" y="1313.5" width="20" height="29" rx="2" fill="url(#sv)" stroke="#3a5fd0" stroke-width="1.2"/>
<path d="M2281 1317V1340M2304 1317V1340" stroke="#3a5fd0" stroke-width="2" stroke-dasharray="1.5 1.5"/>
<text x="2292" y="1334" font-family="Liberation Sans" font-weight="bold" font-size="15" fill="#fff" text-anchor="middle">V</text>
<rect x="2305.5" y="1313.5" width="5" height="29" fill="#fff" stroke="#000" stroke-width="1.4"/>
<!-- globe -->
<ellipse cx="2337" cy="1328" rx="15" ry="15.5" fill="url(#sb)" stroke="#1a6fd6" stroke-width="1.3" transform="rotate(-25 2337 1328)"/>
<path d="M2339 1313C2334 1320 2336 1333 2345 1342" fill="none" stroke="#1a6fd6" stroke-width="0.8"/>
<path d="M2343 1321L2353 1331L2343 1341L2336 1334L2342 1328L2337 1324Z" fill="url(#sg)" stroke="#3a8a00" stroke-width="1"/>
<circle cx="2346" cy="1319" r="2.5" fill="#0a2a6a"/>
<!-- download -->
<rect x="2364.5" y="1312.5" width="30" height="30" rx="2" fill="url(#sb)" stroke="#1a6fd6" stroke-width="1.3"/>
<path d="M2376 1319H2383V1327H2388L2379.5 1335L2371 1327H2376Z" fill="#0a3a8a"/>
</g></svg>
  <div class="a" style="left:1499px;top:6px;font-size:26px;color:#111;white-space:nowrap;-webkit-text-stroke:0.3px #111">Left &#8984;</div>
 </div>
</div>

<div id="set" class="a">
 <div class="a" style="left:0;top:0;width:1297px;height:56px;background:#c4c4c4"></div>
 <div class="tl" style="left:16px;top:16px;background:#cdcdcd;border-color:#b9b9b9"></div>
 <div class="tl" style="left:56px;top:16px;background:#cdcdcd;border-color:#b9b9b9"></div>
 <div class="tl" style="left:96px;top:16px;background:#28c840;border-color:#1faa34"></div>
 <div class="a" style="left:0;top:11px;width:1297px;text-align:center;font-size:27px;font-weight:bold;color:#747474;-webkit-text-stroke:0.3px #747474">my ubuntu - Shared Folders</div>
 <div class="a" style="left:766px;top:56px;width:177px;height:114px;border-radius:8px;background:#bdbdbd"></div>
<svg class="a" style="left:0;top:0" width="1297" height="440" viewBox="0 0 1297 440">
<defs>
<linearGradient id="lb" x1="0" y1="0" x2="0" y2="1"><stop offset="0" stop-color="#b0ccd3"/><stop offset="1" stop-color="#86bcd2"/></linearGradient>
<linearGradient id="scr" x1="0" y1="0" x2="0" y2="1"><stop offset="0" stop-color="#75abc5"/><stop offset="1" stop-color="#6898d0"/></linearGradient>
</defs>
<g transform="translate(-790,-302)">
<!-- General -->
<rect x="813.5" y="367.5" width="61" height="57" fill="#d3d3d3" stroke="#9b9b9b" stroke-width="1.6"/>
<rect x="815" y="369" width="58" height="41" fill="url(#scr)"/>
<path d="M814 411H825V416H863V411H874" fill="none" stroke="#9b9b9b" stroke-width="1.6"/>
<!-- System -->
<rect x="928.5" y="366.5" width="59" height="59" fill="url(#lb)" stroke="#739ccf" stroke-width="1.6"/>
<rect x="950" y="382" width="16" height="28" fill="#7e7f83"/>
<g stroke="#dcdcdc" stroke-width="2.2"><path d="M942 384H950M942 390H950M942 396H950M942 402H950M942 408H950M966 384H974M966 390H974M966 396H974M966 402H974M966 408H974"/></g>
<!-- Display -->
<rect x="1038.5" y="370.5" width="62" height="45" fill="#d3d3d3" stroke="#9b9b9b" stroke-width="1.6"/>
<rect x="1040" y="372" width="59" height="42" fill="url(#scr)"/>
<path d="M1049 415.5V421.5H1090V415.5" fill="#d3d3d3" stroke="#9b9b9b" stroke-width="1.6"/>
<!-- Storage -->
<rect x="1158.5" y="364.5" width="51" height="61" rx="6" fill="url(#lb)" stroke="#739ccf" stroke-width="1.6"/>
<circle cx="1184" cy="390" r="22.5" fill="#d0d0d0" stroke="#739ccf" stroke-width="1.4"/>
<circle cx="1184" cy="390" r="6" fill="#7499c6"/>
<path d="M1163 419C1162 416 1163 415 1166 413L1190 397C1193 395 1195 397 1193 400L1176 420C1174 422 1173 422 1170 422Z" fill="#7499c6"/>
<!-- Audio -->
<path d="M1274 366C1274 364 1276 363 1278 364L1298 382H1316C1318 382 1319 383 1319 385V405C1319 407 1318 408 1316 408H1298L1278 426C1276 427 1274 426 1274 424Z" fill="url(#lb)" stroke="#739ccf" stroke-width="1.6"/>
<path d="M1298 382V408" stroke="#739ccf" stroke-width="1.4"/>
<path d="M1271 389H1274V402H1271C1270 402 1270 401 1270 400V391C1270 390 1270 389 1271 389Z" fill="url(#lb)" stroke="#739ccf" stroke-width="1.2"/>
<path d="M1267 382C1260 389 1260 402 1267 409" fill="none" stroke="#739ccf" stroke-width="1.6"/>
<path d="M1262 377C1252 387 1252 405 1262 415" fill="none" stroke="#739ccf" stroke-width="1.6"/>
<!-- Network -->
<rect x="1381.5" y="367.5" width="47" height="35" fill="#d3d3d3" stroke="#9b9b9b" stroke-width="1.6"/>
<rect x="1383" y="369" width="44" height="32" fill="url(#scr)"/>
<path d="M1411 402.5V406.5H1420V402.5" fill="#d3d3d3" stroke="#9b9b9b" stroke-width="1.4"/>
<rect x="1366.5" y="386.5" width="47" height="34" fill="#d3d3d3" stroke="#9b9b9b" stroke-width="1.6"/>
<rect x="1368" y="388" width="44" height="31" fill="url(#scr)"/>
<path d="M1375 421V425H1406V421" fill="#d3d3d3" stroke="#9b9b9b" stroke-width="1.6"/>
<!-- Ports -->
<g transform="translate(1514,387) rotate(-45)">
<rect x="4.5" y="-20" width="8.5" height="40" fill="#d6d6d6" stroke="#9b9b9b" stroke-width="1.3"/>
<rect x="-52" y="-4" width="9" height="8" fill="url(#lb)" stroke="#739ccf" stroke-width="1.2"/>
<path d="M-20 -17C-38 -17 -44 -7 -44 0C-44 7 -38 17 -20 17Z" fill="url(#lb)" stroke="#739ccf" stroke-width="1.3"/>
<rect x="-22" y="-19" width="17.5" height="38" fill="url(#lb)" stroke="#739ccf" stroke-width="1.3"/>
<rect x="-31" y="-26" width="10" height="9" fill="#7499c6"/>
<rect x="-31" y="17" width="10" height="9" fill="#7499c6"/>
<rect x="-4.5" y="-28" width="9" height="56" rx="1" fill="url(#lb)" stroke="#739ccf" stroke-width="1.3"/>
</g>
<!-- Shared folders -->
<path d="M1635.5 374V368C1635.5 367 1636 366.5 1637 366.5H1673C1674 366.5 1674.5 367 1674.5 368V374Z" fill="#7a99c2"/>
<path d="M1629 374.5L1636 366.5H1672L1675 374.5Z" fill="#7a99c2"/>
<rect x="1612.5" y="374.5" width="62" height="45" fill="url(#lb)" stroke="#739ccf" stroke-width="1.6"/>
<!-- User interface -->
<rect x="1794.5" y="368.5" width="62" height="55" fill="#9ac4d4" stroke="#739ccf" stroke-width="1.6"/>
<rect x="1797" y="371" width="57" height="50" fill="#d3d3d3"/>
<rect x="1797" y="375" width="57" height="8" fill="#7a99c2"/>
<rect x="1800" y="385" width="11" height="11" fill="#7499c6"/>
<rect x="1800" y="398" width="11" height="11" fill="#6d96c8"/>
<rect x="1822" y="385" width="30" height="34" fill="#b2cdd4"/>
</g></svg>
 <div class="lbl" style="left:-7px;top:62px;width:120px;top:133px">General</div>
 <div class="lbl" style="left:107px;top:133px;width:120px">System</div>
 <div class="lbl" style="left:219px;top:133px;width:120px">Display</div>
 <div class="lbl" style="left:333px;top:133px;width:120px">Storage</div>
 <div class="lbl" style="left:440px;top:133px;width:120px">Audio</div>
 <div class="lbl" style="left:548px;top:133px;width:120px">Network</div>
 <div class="lbl" style="left:655px;top:133px;width:120px">Ports</div>
 <div class="lbl" style="left:774px;top:133px;width:160px">Shared Folders</div>
 <div class="lbl" style="left:956px;top:133px;width:160px">User Interface</div>
 <div class="a" style="left:24px;top:200px;font-size:26.5px;color:#6d6d6d;white-space:nowrap">Shared Folders</div>
 <div class="a" style="left:223px;top:211px;width:1051px;height:2px;background:#b4b4b4"></div>
 <div class="a" style="left:25px;top:252px;width:1190px;height:398px;border:1px solid #acacac;background:#cbcbcb">
  <div class="a" style="left:0;top:0;width:1188px;height:35px;border-bottom:1px solid #bdbdbd"></div>
  <div class="a" style="left:9px;top:5px;font-size:22px;color:#6d6d6d">Name</div>
  <div class="a" style="left:79px;top:6px;width:1px;height:24px;background:#bcbcbc"></div>
  <div class="a" style="left:88px;top:5px;font-size:22px;color:#6d6d6d">Path</div>
  <div class="a" style="left:904px;top:6px;width:1px;height:24px;background:#bcbcbc"></div>
  <div class="a" style="left:913px;top:5px;font-size:22px;color:#6d6d6d">Access</div>
  <div class="a" style="left:1000px;top:6px;width:1px;height:24px;background:#bcbcbc"></div>
  <div class="a" style="left:1009px;top:4px;font-size:23px;color:#6d6d6d">Auto Mount</div>
  <div class="a" style="left:1145px;top:6px;width:1px;height:24px;background:#bcbcbc"></div>
  <div class="a" style="left:1154px;top:5px;font-size:22px;color:#6d6d6d">At</div>
  <div class="a" style="left:58px;top:38px;font-size:27px;color:#6a6a6a;white-space:nowrap;-webkit-text-stroke:0.3px #6a6a6a">Machine Folders</div>
  <div class="a" style="left:58px;top:74px;font-size:27px;color:#6a6a6a;white-space:nowrap;-webkit-text-stroke:0.3px #6a6a6a">Transient Folders</div>
 </div>
<svg class="a" style="left:1228px;top:260px" width="40" height="160" viewBox="0 0 40 160">
<g transform="translate(-2018,-562)">
<path d="M2034 568H2052C2053 568 2054 569 2054 570V573H2032Z" fill="#6f90c8"/>
<rect x="2022.5" y="572.5" width="31" height="23" fill="#6aaee0" stroke="#5b88c8" stroke-width="1.2"/>
<path d="M2036 580H2041V574H2048V580H2053V587H2048V593H2041V587H2036Z" fill="#9fd45a" stroke="#6ea83a" stroke-width="1.2"/>
<path d="M2034 628H2052C2053 628 2054 629 2054 630V633H2032Z" fill="#bdbdbd"/>
<rect x="2022.5" y="632.5" width="31" height="23" fill="#c4c4c4" stroke="#b3b3b3" stroke-width="1.2"/>
<circle cx="2043" cy="646" r="6" fill="none" stroke="#b3b3b3" stroke-width="3" stroke-dasharray="3 2"/>
<path d="M2034 688H2052C2053 688 2054 689 2054 690V693H2032Z" fill="#bdbdbd"/>
<rect x="2022.5" y="692.5" width="31" height="23" fill="#c4c4c4" stroke="#b3b3b3" stroke-width="1.2"/>
<path d="M2036 698L2052 714M2052 698L2036 714" stroke="#b3b3b3" stroke-width="4"/>
</g></svg>
 <div class="a" style="left:972px;top:693px;width:134px;height:41px;border-radius:9px;background:#cfcfcf;box-shadow:0 0 0 1px rgba(0,0,0,0.06),0 1px 1px rgba(0,0,0,0.1);text-align:center;line-height:41px;font-size:26px;color:#6d6d6d">Cancel</div>
 <div class="a" style="left:1138px;top:693px;width:134px;height:41px;border-radius:9px;background:#cfcfcf;box-shadow:0 0 0 1px rgba(0,0,0,0.06),0 1px 1px rgba(0,0,0,0.1);text-align:center;line-height:41px;font-size:26px;color:#6d6d6d">OK</div>
</div>

<div id="sheet" class="a">
 <div class="sl" style="right:465px;top:54px">Folder Path:</div>
 <div class="a" style="left:234px;top:47px;width:384px;height:40px;border-radius:9px;background:#fff;box-shadow:0 0 0 1px rgba(0,0,0,0.12),0 1px 2px rgba(0,0,0,0.2)"></div>
 <svg class="a" style="left:241px;top:53px" width="30" height="28" viewBox="0 0 30 28"><path d="M1 3C1 1.8 1.8 1 3 1H10L13 4H27C28.2 4 29 4.8 29 6V25C29 26.2 28.2 27 27 27H3C1.8 27 1 26.2 1 25Z" fill="#3d9ee8"/><path d="M1 8H29V25C29 26.2 28.2 27 27 27H3C1.8 27 1 26.2 1 25Z" fill="#6cc0f5"/></svg>
 <div class="sl" style="left:278px;top:52px">/Users/dsavina/Docs</div>
 <div class="a" style="left:582px;top:51px;width:32px;height:32px;border-radius:7px;background:linear-gradient(180deg,#3c97fc,#1474ec)"></div>
 <svg class="a" style="left:590px;top:62px" width="16" height="11" viewBox="0 0 16 11"><path d="M2.5 2.5L8 8L13.5 2.5" fill="none" stroke="#fff" stroke-width="2.6" stroke-linecap="round" stroke-linejoin="round"/></svg>
 <div class="sl" style="right:465px;top:122px">Folder Name:</div>
 <div class="a" style="left:227px;top:117px;width:397px;height:39px;background:#fff;box-shadow:0 0 0 1px rgba(0,0,0,0.1),0 1px 1px rgba(0,0,0,0.15)"></div>
 <div class="sl" style="left:231px;top:122px">Docs</div>
 <div class="cb cboff" style="top:179px"></div>
 <div class="sl" style="left:263px;top:177px">Read-only</div>
 <div class="cb cbon" style="top:224px"></div>
 <svg class="a" style="left:231px;top:229px" width="18" height="18" viewBox="0 0 18 18"><path d="M3 9.5L7 14L15 3.5" fill="none" stroke="#fff" stroke-width="3" stroke-linecap="round" stroke-linejoin="round"/></svg>
 <div class="sl" style="left:263px;top:223px">Auto-mount</div>
 <div class="sl" style="right:465px;top:276px">Mount point:</div>
 <div class="a" style="left:223px;top:267px;width:405px;height:47px;border-radius:3px;background:#7db0f6"></div>
 <div class="a" style="left:227px;top:271px;width:397px;height:39px;background:#fff"></div>
 <div class="sl" style="left:230px;top:276px">/mnt/Docs</div>
 <div class="a" style="left:355px;top:274px;width:2px;height:32px;background:#000"></div>
 <div class="cb cbon" style="top:333px"></div>
 <svg class="a" style="left:231px;top:338px" width="18" height="18" viewBox="0 0 18 18"><path d="M3 9.5L7 14L15 3.5" fill="none" stroke="#fff" stroke-width="3" stroke-linecap="round" stroke-linejoin="round"/></svg>
 <div class="sl" style="left:263px;top:331px">Make Permanent</div>
 <div class="a" style="left:324px;top:400px;width:134px;height:40px;border-radius:9px;background:#fff;box-shadow:0 0 0 1px rgba(0,0,0,0.1),0 1px 2px rgba(0,0,0,0.2);text-align:center;line-height:40px;font-size:26px;color:#111;-webkit-text-stroke:0.4px #111">Cancel</div>
 <div class="a" style="left:490px;top:400px;width:134px;height:40px;border-radius:9px;background:linear-gradient(180deg,#2f8dfb,#1876f0);text-align:center;line-height:40px;font-size:26px;color:#fff;-webkit-text-stroke:0.4px #fff">OK</div>
</div>
</body></html>
